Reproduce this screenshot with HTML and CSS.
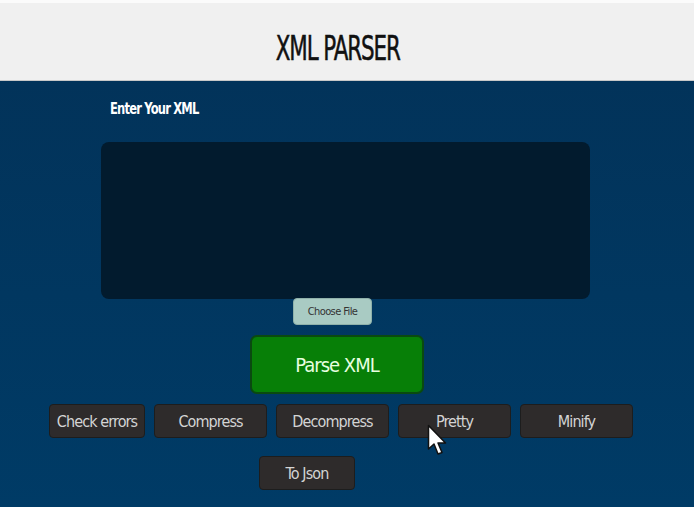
FILE: index.html
```html
<!DOCTYPE html>
<html>
<head>
<meta charset="utf-8">
<link rel="stylesheet" href="styles.css">
</head>
<body>
<header class="topbar"><h1 class="title">XML PARSER</h1></header>
<main class="main">
  <label class="label">Enter Your XML</label>
  <div class="editor"></div>
  <div class="file-row"><button class="file-btn">Choose File</button></div>
  <div class="parse-row"><button class="parse-btn">Parse XML</button></div>
  <div class="actions">
    <button class="act w96">Check errors</button>
    <button class="act">Compress</button>
    <button class="act">Decompress</button>
    <button class="act">Pretty</button>
    <button class="act">Minify</button>
  </div>
  <div class="actions second">
    <button class="act w96">To Json</button>
  </div>
  <svg class="cursor" width="22" height="34" viewBox="0 0 22 34">
    <path d="M1.5 1.5 L1.5 25 L7 20 L11 30 L15 28.5 L11 19 L18.5 19 Z" fill="#fff" stroke="#111" stroke-width="1.5" stroke-linejoin="round"/>
  </svg>
</main>
</body>
</html>
```
FILE: styles.css
```css
* { box-sizing: border-box; }
html, body { margin: 0; padding: 0; }
body {
  width: 694px;
  height: 507px;
  overflow: hidden;
  font-family: "DejaVu Sans", sans-serif;
  font-stretch: condensed;
  background: #003a63;
}
.topbar {
  background: #f0f0f0;
  border-top: 3px solid #fbfbfb;
  height: 81px;
  display: flex;
  align-items: center;
  justify-content: center;
  border-bottom: 1px solid #c8c8c8;
}
.title {
  margin: 0;
  font-size: 34px;
  font-weight: normal;
  color: #111;
  letter-spacing: -1.5px;
  transform: translateX(-9px) scaleX(0.7);
  padding-top: 12px;
  -webkit-text-stroke: 0.5px #111;
}
.main {
  position: relative;
  height: 426px;
  background: linear-gradient(180deg, #02335a 0%, #003b66 100%);
  padding-top: 18px;
}
.label {
  display: block;
  margin-left: 110px;
  color: #fff;
  font-weight: bold;
  font-size: 16px;
  letter-spacing: -1px;
  transform: scaleX(0.8);
  transform-origin: left center;
}
.editor {
  margin: 24px 0 0 101px;
  width: 489px;
  height: 157px;
  background: #021b2e;
  border-radius: 8px;
}
.file-row {
  display: flex;
  justify-content: flex-start;
  padding-left: 293px;
  margin-top: -1px;
}
.file-btn {
  width: 79px;
  height: 27px;
  background: #a9cbc3;
  border: 1px solid #8fb1aa;
  border-radius: 4px;
  font-family: inherit;
  font-stretch: condensed;
  font-size: 11px;
  color: #333;
  letter-spacing: -0.6px;
  padding: 0;
}
.parse-row {
  display: flex;
  padding-left: 250px;
  margin-top: 10px;
}
.parse-btn {
  width: 174px;
  height: 59px;
  background: #077f07;
  border: 2px solid #0a4a10;
  border-radius: 7px;
  color: #e8ffe0;
  font-family: inherit;
  font-stretch: condensed;
  font-size: 20px;
  letter-spacing: -1px;
  padding: 0;
}
.actions {
  display: flex;
  gap: 9px;
  padding-left: 49px;
  margin-top: 10px;
}
.actions.second {
  padding-left: 259px;
  margin-top: 18px;
}
.act {
  width: 113px;
  height: 34px;
  background: #2e2b2b;
  border: 1px solid #1d1d1d;
  border-radius: 4px;
  color: #d4d4d4;
  font-family: inherit;
  font-stretch: condensed;
  font-size: 16px;
  letter-spacing: -0.9px;
  padding: 0;
}
.act.w96 { width: 96px; }
.cursor {
  position: absolute;
  left: 427px;
  top: 343px;
}
```
